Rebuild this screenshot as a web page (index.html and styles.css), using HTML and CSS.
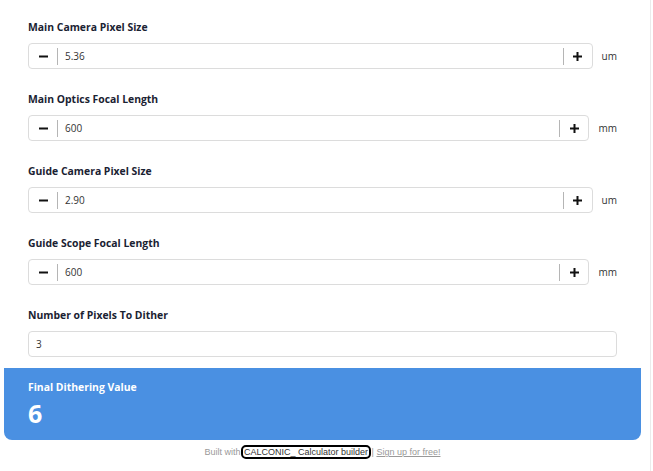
FILE: index.html
```html
<!DOCTYPE html>
<html lang="en">

<head>
    <meta charset="UTF-8">
    <title>Dithering calculator</title>
    <link rel="stylesheet" href="styles.css">
</head>

<body>
    <div class="page">
        <div class="calc">
            <div class="fields">
                <div class="field">
                    <div class="label">Main Camera Pixel Size</div>
                    <div class="row">
                        <div class="stepper">
                            <span class="btn"><svg width="9" height="9" viewBox="0 0 9 9"><path d="M0 4.5h9" stroke="#111" stroke-width="2"/></svg></span>
                            <span class="sep"></span>
                            <span class="value">5.36</span>
                            <span class="sep"></span>
                            <span class="btn"><svg width="9" height="9" viewBox="0 0 9 9"><path d="M0 4.5h9M4.5 0v9" stroke="#111" stroke-width="2"/></svg></span>
                        </div>
                        <span class="unit">um</span>
                    </div>
                </div>
                <div class="field">
                    <div class="label">Main Optics Focal Length</div>
                    <div class="row">
                        <div class="stepper">
                            <span class="btn"><svg width="9" height="9" viewBox="0 0 9 9"><path d="M0 4.5h9" stroke="#111" stroke-width="2"/></svg></span>
                            <span class="sep"></span>
                            <span class="value">600</span>
                            <span class="sep"></span>
                            <span class="btn"><svg width="9" height="9" viewBox="0 0 9 9"><path d="M0 4.5h9M4.5 0v9" stroke="#111" stroke-width="2"/></svg></span>
                        </div>
                        <span class="unit">mm</span>
                    </div>
                </div>
                <div class="field">
                    <div class="label">Guide Camera Pixel Size</div>
                    <div class="row">
                        <div class="stepper">
                            <span class="btn"><svg width="9" height="9" viewBox="0 0 9 9"><path d="M0 4.5h9" stroke="#111" stroke-width="2"/></svg></span>
                            <span class="sep"></span>
                            <span class="value">2.90</span>
                            <span class="sep"></span>
                            <span class="btn"><svg width="9" height="9" viewBox="0 0 9 9"><path d="M0 4.5h9M4.5 0v9" stroke="#111" stroke-width="2"/></svg></span>
                        </div>
                        <span class="unit">um</span>
                    </div>
                </div>
                <div class="field">
                    <div class="label">Guide Scope Focal Length</div>
                    <div class="row">
                        <div class="stepper">
                            <span class="btn"><svg width="9" height="9" viewBox="0 0 9 9"><path d="M0 4.5h9" stroke="#111" stroke-width="2"/></svg></span>
                            <span class="sep"></span>
                            <span class="value">600</span>
                            <span class="sep"></span>
                            <span class="btn"><svg width="9" height="9" viewBox="0 0 9 9"><path d="M0 4.5h9M4.5 0v9" stroke="#111" stroke-width="2"/></svg></span>
                        </div>
                        <span class="unit">mm</span>
                    </div>
                </div>
                <div class="field last">
                    <div class="label">Number of Pixels To Dither</div>
                    <div class="row">
                        <div class="plain">3</div>
                    </div>
                </div>
            </div>
            <div class="result">
                <div class="result-label">Final Dithering Value</div>
                <div class="result-value">6</div>
            </div>
            <div class="footer">
                Built with <a href="#" class="brand">CALCONIC_ Calculator builder</a> | <a href="#" class="signup">Sign up for free!</a>
            </div>
        </div>
    </div>
</body>

</html>
```

FILE: styles.css
```css
* {
    margin: 0;
    padding: 0;
    box-sizing: border-box;
}

body {
    font-family: "Open Sans", "Noto Sans", sans-serif;
    color: #1d2433;
    background: #fff;
}

.page {
    width: 651px;
    height: 471px;
    border-right: 1px solid #ebebeb;
    padding: 19px 0 0 4px;
}

.calc {
    width: 637px;
}

.fields {
    padding: 0 24px;
}

.field {
    margin-bottom: 22px;
}

.field.last {
    margin-bottom: 11px;
}

.label {
    font-size: 10.4px;
    font-weight: 700;
    line-height: 16px;
    margin-bottom: 8px;
    color: #1a2232;
}

.row {
    display: flex;
    align-items: center;
    gap: 9px;
}

.stepper {
    flex: 1;
    height: 26px;
    border: 1px solid #dcdcdc;
    border-radius: 4px;
    display: flex;
    align-items: center;
}

.btn {
    width: 28px;
    height: 24px;
    display: flex;
    align-items: center;
    justify-content: center;
}

.sep {
    width: 1px;
    height: 17px;
    background: #b5b5b5;
}

.value {
    flex: 1;
    padding-left: 7px;
    font-size: 10px;
    color: #333;
}

.unit {
    font-size: 10px;
    color: #333;
}

.plain {
    flex: 1;
    height: 26px;
    border: 1px solid #dcdcdc;
    border-radius: 4px;
    padding-left: 7px;
    font-size: 10px;
    line-height: 24px;
    color: #333;
}

.result {
    background: #4a90e2;
    color: #fff;
    border-radius: 0 0 8px 8px;
    height: 72px;
    padding: 11px 24px 0;
}

.result-label {
    font-size: 10.4px;
    font-weight: 700;
    line-height: 16px;
}

.result-value {
    font-size: 25px;
    font-weight: 700;
    line-height: 36px;
}

.footer {
    text-align: center;
    font-family: "Liberation Sans", Arial, sans-serif;
    font-size: 9px;
    color: #999;
    padding-top: 7px;
}

.footer a {
    color: #999;
}

.brand {
    color: #333 !important;
    text-decoration: none;
    outline: 2px solid #000;
    border-radius: 3px;
    padding: 0 1px;
}
```
